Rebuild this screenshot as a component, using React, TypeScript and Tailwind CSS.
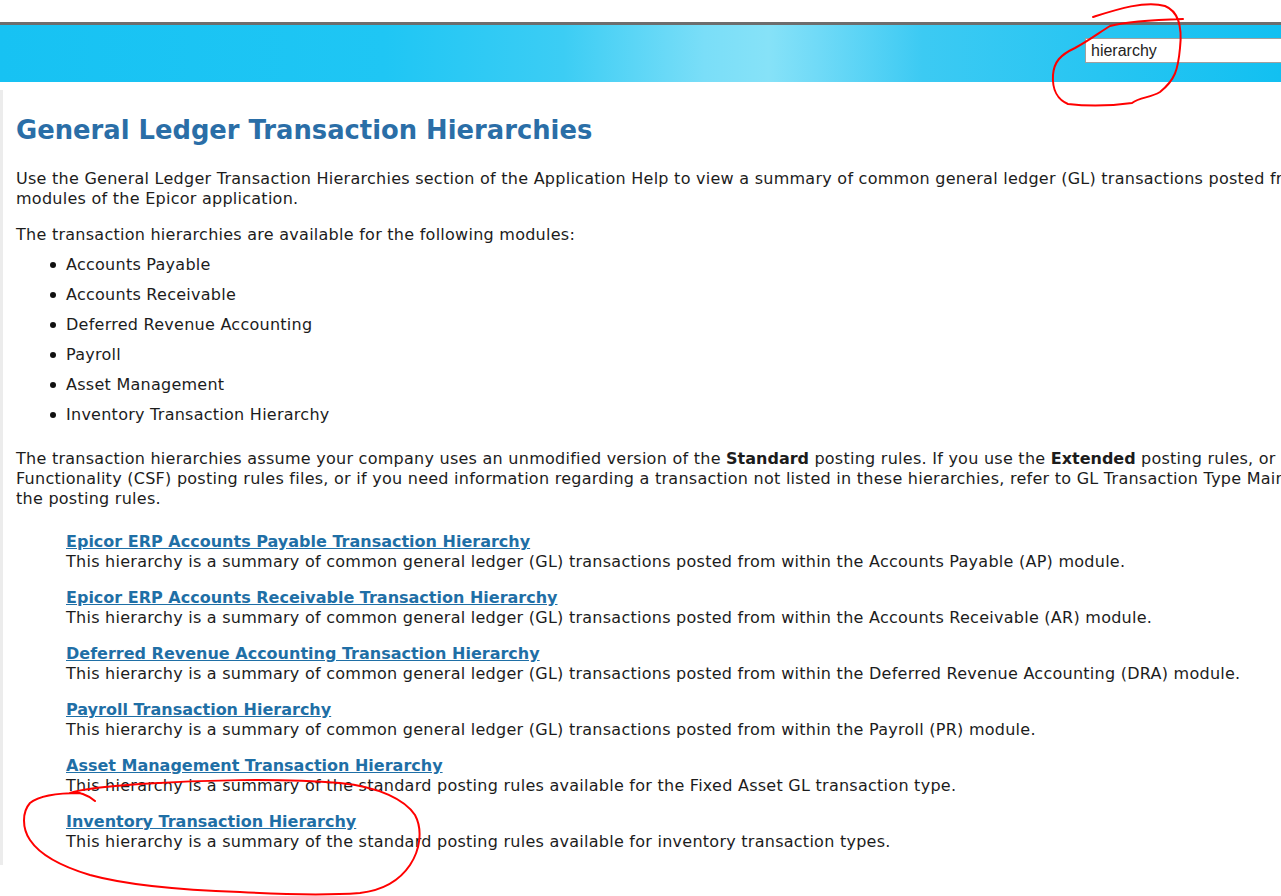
import React from "react";

const items = [
  "Accounts Payable",
  "Accounts Receivable",
  "Deferred Revenue Accounting",
  "Payroll",
  "Asset Management",
  "Inventory Transaction Hierarchy",
];

const links = [
  ["Epicor ERP Accounts Payable Transaction Hierarchy", "This hierarchy is a summary of common general ledger (GL) transactions posted from within the Accounts Payable (AP) module."],
  ["Epicor ERP Accounts Receivable Transaction Hierarchy", "This hierarchy is a summary of common general ledger (GL) transactions posted from within the Accounts Receivable (AR) module."],
  ["Deferred Revenue Accounting Transaction Hierarchy", "This hierarchy is a summary of common general ledger (GL) transactions posted from within the Deferred Revenue Accounting (DRA) module."],
  ["Payroll Transaction Hierarchy", "This hierarchy is a summary of common general ledger (GL) transactions posted from within the Payroll (PR) module."],
  ["Asset Management Transaction Hierarchy", "This hierarchy is a summary of the standard posting rules available for the Fixed Asset GL transaction type."],
  ["Inventory Transaction Hierarchy", "This hierarchy is a summary of the standard posting rules available for inventory transaction types."],
];

export default function App() {
  return (
    <div className="relative w-[1281px] h-[896px] overflow-hidden bg-white text-[#1c1c1c] font-['DejaVu_Sans',Verdana,sans-serif]">
      <div className="h-[22px]" />
      <div className="h-[3px] bg-[#6d6d6d]" />
      <div className="h-[57px] flex items-start pt-[13px] justify-end bg-[linear-gradient(90deg,#17c2f3_0%,#1fc6f4_30%,#3ccdf4_44%,#7adef8_55%,#86e2f8_60%,#6fdaf7_64%,#3ccaf3_72%,#12c0f1_100%)]">
        <div className="w-[196px] h-[25px] bg-white border border-[#a0a0a0] border-r-0 pl-[5px] flex items-center text-[16px] text-[#222] font-['Liberation_Sans',Arial,sans-serif]">
          hierarchy
        </div>
      </div>
      <div className="h-[8px]" />
      <div className="border-l-[3px] border-[#ececec] pl-[13px] h-[775px] overflow-visible whitespace-nowrap text-[16px] leading-[20px] tracking-[0.26px]">
        <h1 className="pt-[23px] text-[25.8px] leading-[34px] font-bold tracking-normal text-[#2a6ea7]">
          General Ledger Transaction Hierarchies
        </h1>
        <p className="mt-[22px]">
          Use the General Ledger Transaction Hierarchies section of the Application Help to view a summary of common general ledger (GL) transactions posted from within the<br />
          modules of the Epicor application.
        </p>
        <p className="mt-[16px]">The transaction hierarchies are available for the following modules:</p>
        <ul className="mt-[10px] flex flex-col gap-[10px]">
          {items.map((t) => (
            <li key={t} className="flex items-center">
              <span className="w-[50px] flex justify-end pr-[10px]">
                <span className="w-[6px] h-[6px] rounded-full bg-[#111]" />
              </span>
              {t}
            </li>
          ))}
        </ul>
        <p className="mt-[24px]">
          The transaction hierarchies assume your company uses an unmodified version of the <b className="tracking-normal">Standard</b> posting rules. If you use the <b className="tracking-normal">Extended</b> posting rules, or Consolidated Site<br />
          Functionality (CSF) posting rules files, or if you need information regarding a transaction not listed in these hierarchies, refer to GL Transaction Type Maintenance to review<br />
          the posting rules.
        </p>
        <div className="mt-[23px] pl-[50px] flex flex-col gap-[16px]">
          {links.map(([a, d]) => (
            <div key={a}>
              <a className="font-bold underline tracking-normal text-[#1f6fa6] block">{a}</a>
              <div>{d}</div>
            </div>
          ))}
        </div>
      </div>
      <svg className="absolute left-0 top-0 pointer-events-none" width="1281" height="896" viewBox="0 0 1281 896" fill="none" stroke="#ff0000" strokeWidth="2" strokeLinecap="round" strokeLinejoin="round">
        <path d="M1093 17 C1115 10 1145 0 1165 6 C1180 12 1182 30 1180 48 C1178 70 1175 80 1160 92 C1150 98 1140 97 1132 103 C1110 106 1085 106 1068 104 C1058 100 1052 90 1053 75 C1054 62 1060 55 1075 48 C1090 40 1100 32 1110 26 C1125 22 1150 20 1183 19" />
        <path d="M95 801 C88 795 78 791 70 793 C85 788 110 786 140 784 C200 780 280 778 340 783 C380 787 405 800 415 815 C423 830 420 850 410 865 C400 880 385 890 360 893 C320 896 275 894 240 892 C180 890 130 886 90 875 C60 866 40 855 30 840 C22 828 22 812 30 803 C40 795 60 793 80 793" />
      </svg>
    </div>
  );
}
